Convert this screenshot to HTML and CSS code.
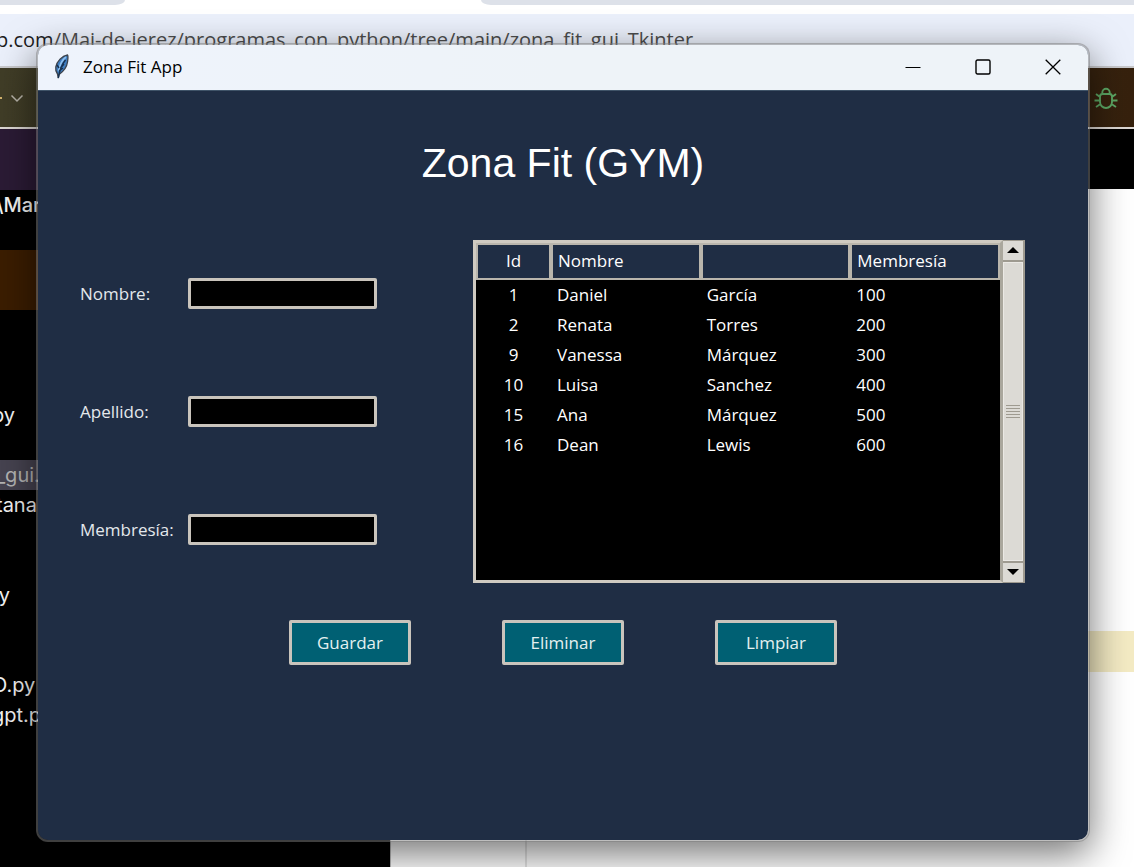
FILE: index.html
```html
<!DOCTYPE html>
<html lang="es">
<head>
<meta charset="utf-8">
<meta name="viewport" content="width=device-width, initial-scale=1">
<title>Zona Fit App</title>
<link rel="stylesheet" href="styles.css">
</head>
<body>
<div class="desktop">
  <div class="tabstrip"><span class="tab tab-first"></span><span class="tab tab-rest"></span></div>
  <div class="address"><span class="domain">p.com</span>/Mai-de-jerez/programas_con_python/tree/main/zona_fit_gui_Tkinter</div>
  <div class="toolbar">
    <span class="branch"><i class="dash"></i>
      <svg width="14" height="14" viewBox="0 0 14 14" fill="none" stroke="#b9b5ab" stroke-width="1.5"><path d="M1.5 4.5 7 10l5.500-5.500"/></svg>
    </span>
    <svg class="bug" width="24" height="24" viewBox="0 0 24 24" fill="none" stroke="#5da865" stroke-width="1.900"><path d="M6 10.500Q6 8 8.500 8h7Q18 8 18 10.500V16a6 6 0 0 1-12 0zM8.300 8V6.500a3.700 3.700 0 0 1 7.400 0V8M6 11 2 8M6 14.500H.5M6.500 18 2 21M18 11l4-3M18 14.500h5.500M17.500 18l4.500 3"/></svg>
  </div>
  <div class="workspace">
    <div class="sidebar">
      <div class="side-head"></div>
      <div class="row near strong">\Mar</div>
      <div class="row"></div>
      <div class="row brown"></div>
      <div class="row brown"></div>
      <div class="row"></div>
      <div class="row"></div>
      <div class="row"></div>
      <div class="row">py</div>
      <div class="row"></div>
      <div class="row near selected">_gui.</div>
      <div class="row near">tana.</div>
      <div class="row"></div>
      <div class="row"></div>
      <div class="row far">py</div>
      <div class="row"></div>
      <div class="row"></div>
      <div class="row">O.py</div>
      <div class="row">gpt.p</div>
    </div>
    <div class="editor">
      <div class="editor-tabs"></div>
      <div class="editor-page"><div class="gutter"></div><div class="code"><div class="current-line"></div></div></div>
    </div>
  </div>

  <main class="window">
    <header class="titlebar">
      <svg class="feather" width="16" height="26" viewBox="0 0 16 26"><path d="M13.500 1C8 2 3 7 1.800 13c-.5 3 .2 5 1.700 7l.8 4 .8-3.500C10 17 13 12 13.500 8 13.900 5 14.500 2 13.500 1z" fill="#3f7dc0" stroke="#3d434d" stroke-width="1.300"/><path d="M12 3C8 6 6 9 4.500 17" stroke="#8fc0ee" stroke-width="1.600" fill="none"/><path d="M11.500 6C8 10 6 14 4.300 24M10 10l-3.500 4M9 14l-4 3M3 11l2 3" stroke="#17304f" stroke-width="1.400" fill="none"/></svg>
      <span class="caption">Zona Fit App</span>
      <button class="winbtn" type="button" aria-label="Minimizar"><svg width="16" height="16" viewBox="0 0 16 16" fill="none" stroke="#000"><path d="M.5 8.500h15"/></svg></button>
      <button class="winbtn" type="button" aria-label="Maximizar"><svg width="16" height="16" viewBox="0 0 16 16" fill="none" stroke="#000" stroke-width="1.400"><rect x="1" y="1" width="14" height="14" rx="1.500"/></svg></button>
      <button class="winbtn" type="button" aria-label="Cerrar"><svg width="16" height="16" viewBox="0 0 16 16" fill="none" stroke="#000" stroke-width="1.300"><path d="m.7.7 14.600 14.600M15.300.7.7 15.300"/></svg></button>
    </header>
    <div class="client">
      <h1>Zona Fit (GYM)</h1>
      <div class="columns">
        <form class="fields" id="cliente">
          <label for="nombre">Nombre:</label><input id="nombre" type="text">
          <label for="apellido">Apellido:</label><input id="apellido" type="text">
          <label for="membresia">Membresía:</label><input id="membresia" type="text">
        </form>
        <div class="tree">
          <div class="tree-view">
            <table>
              <colgroup><col class="col-id"><col><col><col></colgroup>
              <thead><tr><th>Id</th><th>Nombre</th><th></th><th>Membresía</th></tr></thead>
              <tbody>
                <tr><td>1</td><td>Daniel</td><td>García</td><td>100</td></tr>
                <tr><td>2</td><td>Renata</td><td>Torres</td><td>200</td></tr>
                <tr><td>9</td><td>Vanessa</td><td>Márquez</td><td>300</td></tr>
                <tr><td>10</td><td>Luisa</td><td>Sanchez</td><td>400</td></tr>
                <tr><td>15</td><td>Ana</td><td>Márquez</td><td>500</td></tr>
                <tr><td>16</td><td>Dean</td><td>Lewis</td><td>600</td></tr>
              </tbody>
            </table>
          </div>
          <div class="scrollbar">
            <button type="button" aria-label="Subir"><svg width="12" height="6" viewBox="0 0 12 6"><path d="M0 6 6 0l6 6z"/></svg></button>
            <div class="thumb"><i></i><i></i><i></i><i></i><i></i></div>
            <button type="button" aria-label="Bajar"><svg width="12" height="6" viewBox="0 0 12 6"><path d="m0 0 6 6 6-6z"/></svg></button>
          </div>
        </div>
      </div>
      <div class="actions">
        <button type="button">Guardar</button>
        <button type="button">Eliminar</button>
        <button type="button">Limpiar</button>
      </div>
    </div>
  </main>
</div>
</body>
</html>
```

FILE: styles.css
```css
* { box-sizing: border-box; }
body { margin: 0; font-family: "Open Sans", "Noto Sans", sans-serif; }
button { padding: 0; border: 0; font: inherit; color: inherit; }

.desktop {
  position: relative;
  display: flex;
  flex-direction: column;
  min-height: 100vh;
  overflow: hidden;
  background: #fff;
}

/* Browser behind the window */
.tabstrip { display: flex; justify-content: space-between; height: 14px; padding-bottom: 9px; }
.tab { background: #dde1e9; }
.tab-first { width: 125px; border-bottom-right-radius: 10px 5px; }
.tab-rest { width: calc(100% - 481px); border-bottom-left-radius: 10px 5px; }
.address {
  height: 54px;
  border-bottom: 2px solid #c9c9cc;
  background: #ebf0fb;
  color: #4c4c4c;
  font-size: 20px;
  line-height: 52px;
  white-space: nowrap;
  text-indent: -4px;
}
.domain { color: #1d1d1f; }
.toolbar {
  display: flex;
  align-items: center;
  justify-content: space-between;
  height: 61px;
  padding-right: 16px;
  border-bottom: 2px solid #ddd8d4;
  background: linear-gradient(90deg, #403d27, #36210d);
}
.branch { display: flex; align-items: center; gap: 8px; }
.dash { width: 2px; height: 2px; background: #d3b26d; }
.workspace { display: flex; flex: 1; }
.sidebar { width: 390px; background: #000; color: #f4f4f4; font: 20px/30px Inter, sans-serif; }
.side-head { height: 61px; background: #2b1b35; }
.row { height: 30px; text-indent: -8px; }
.near { text-indent: -4px; }
.far { text-indent: -13px; }
.strong { font-weight: 500; }
.brown { background: #3b1d00; }
.selected { background: #464350; color: #b4b4b4; }
.editor { display: flex; flex: 1; flex-direction: column; }
.editor-tabs { height: 60px; background: #000; }
.editor-page { display: flex; flex: 1; background: #fff; }
.gutter { width: 137px; border-right: 2px solid #e4e4e4; border-left: 1px solid #bbb; }
.code { flex: 1; padding-top: 442px; }
.current-line { height: 41px; background: #f4ebc4; }

/* Application window */
.window {
  position: absolute;
  inset: 43px 44px 25px 36px;
  display: flex;
  flex-direction: column;
  overflow: hidden;
  border: 2px solid rgba(125, 125, 125, .5);
  border-radius: 12px;
  background: #1f2d44;
  background-clip: padding-box;
  box-shadow: 0 12px 38px rgba(0, 0, 0, .55);
}
.titlebar {
  display: flex;
  align-items: center;
  height: 46px;
  padding: 0 0 2px 16px;
  border-bottom: 1px solid #3f5368;
  background: linear-gradient(90deg, #eef3fc, #eef3f8 50%);
}
.caption { flex: 1; margin-left: 13px; color: #000; font-size: 17px; }
.winbtn { display: grid; place-items: center; width: 70px; height: 43px; background: none; }
.client { padding: 49px 63px 24px 42px; color: #fff; font-size: 17px; }
h1 {
  margin: 0 -21px 0 0;
  font: 41px/46px "Liberation Sans", Arial, sans-serif;
  text-align: center;
}
.columns {
  display: grid;
  grid-template-columns: 297px minmax(0, 1fr);
  align-items: center;
  gap: 96px;
  margin-top: 48px;
}
.fields {
  display: grid;
  grid-template-columns: 108px 1fr;
  grid-auto-rows: 118px;
  align-items: center;
  color: #e4e8ec;
}
.fields input {
  width: 100%;
  height: 31px;
  padding: 0 5px;
  border: 3px solid #c9c4bc;
  border-radius: 2px;
  outline: 0;
  background: #000;
  color: #fff;
  font: inherit;
}
.tree { display: flex; height: 343px; }
.tree-view { flex: 1; border: 3px solid #cfcac1; border-right-color: #aaa79d; background: #000; }
table { width: 100%; table-layout: fixed; border-collapse: separate; border-spacing: 0; }
.col-id { width: 75px; }
th, td { overflow: hidden; text-align: left; font-weight: 400; line-height: 22px; }
th { height: 37px; padding: 0 5px; border: 2px solid #b9b5ac; background: #1f2d44; }
td { height: 30px; padding: 0 6px; }
th:first-child, td:first-child { text-align: center; }
.scrollbar {
  display: flex;
  flex-direction: column;
  gap: 2px;
  width: 22px;
  border: 1px solid #9e9a90;
  border-width: 1px 2px 1px 0;
  background: #9e9a90;
}
.scrollbar button { display: grid; place-items: center; height: 19px; background: #dcdad5; }
.thumb {
  display: flex;
  flex: 1;
  flex-direction: column;
  justify-content: center;
  gap: 2px;
  padding: 0 2px;
  border: 1px solid #ebe9e5;
  background: #dcdad5;
}
.thumb i { height: 1px; background: #9e9a90; }
.actions { display: flex; justify-content: center; gap: 91px; margin: 32px -21px 0 0; }
.actions button {
  width: 122px;
  height: 45px;
  border: 3px solid #c9c4bc;
  border-radius: 2px;
  background: #006073;
  color: #e4f0f0;
}
```
